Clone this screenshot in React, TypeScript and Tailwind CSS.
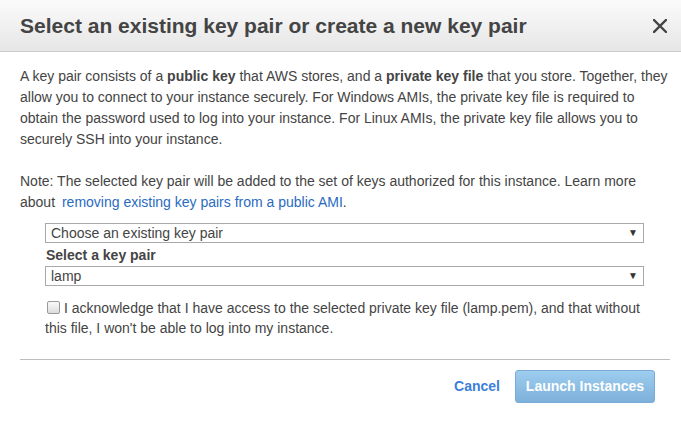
function SelectBox({ value }: { value: string }) {
  return (
    <div className="flex items-center justify-between h-5 border border-[#a9a9a9] bg-white pl-[5px] pr-[5px] text-[14px] leading-none text-[#444]">
      <span>{value}</span>
      <span className="text-[10px] text-[#333]">▼</span>
    </div>
  );
}

export default function App() {
  return (
    <div className="w-[681px] h-[424px] bg-white text-[#444] font-['Liberation_Sans',Arial,sans-serif]">
      <div className="flex items-center justify-between h-[52px] pl-5 pr-[14px] border-b border-[#cccccc] bg-gradient-to-b from-[#fbfbfb] to-[#e6e6e6]">
        <h1 className="text-[21px] font-bold text-[#444]">Select an existing key pair or create a new key pair</h1>
        <svg width="14" height="14" viewBox="0 0 14 14" className="mt-[1px]">
          <path d="M1 1L13 13M13 1L1 13" stroke="#444" strokeWidth="2.4" strokeLinecap="square" />
        </svg>
      </div>

      <div className="pl-5 pr-[9px] pt-[14px] text-[14px] leading-[21px]">
        <p>
          A key pair consists of a <b>public key</b> that AWS stores, and a <b>private key file</b> that you store. Together, they
          allow you to connect to your instance securely. For Windows AMIs, the private key file is required to
          obtain the password used to log into your instance. For Linux AMIs, the private key file allows you to
          securely SSH into your instance.
        </p>
        <p className="mt-[21px]">
          Note: The selected key pair will be added to the set of keys authorized for this instance. Learn more
          about <a className="ml-[3px] text-[#2a6bbf]">removing existing key pairs from a public AMI</a>.
        </p>

        <div className="ml-[25px] mr-[28px] mt-[10px]">
          <SelectBox value="Choose an existing key pair" />
          <div className="mt-[3px] mb-[2px] text-[14px] leading-[18px] font-bold text-[#444] pl-[1px]">Select a key pair</div>
          <SelectBox value="lamp" />
        </div>

        <div className="ml-[25px] mr-[28px] mt-[12px] text-[14px] leading-[20px]">
          <label>
            <span className="inline-block align-[-1px] w-[13px] h-[13px] mr-[4px] ml-[2px] rounded-[2px] border border-[#999] bg-gradient-to-b from-[#fafafa] to-[#dcdcdc]" />
            I acknowledge that I have access to the selected private key file (lamp.pem), and that without
            this file, I won't be able to log into my instance.
          </label>
        </div>
      </div>

      <div className="ml-5 mr-[11px] mt-[21px] h-px bg-[#bdbdbd]" />

      <div className="flex items-center justify-end gap-[15px] pr-[26px] mt-[10px]">
        <a className="text-[14px] font-bold text-[#3b7fd8]">Cancel</a>
        <button className="w-[140px] h-[33px] rounded-[3px] border border-[#7aaad6] bg-gradient-to-b from-[#9dcdef] to-[#7eb1da] text-white text-[14px] font-bold">
          Launch Instances
        </button>
      </div>
    </div>
  );
}
